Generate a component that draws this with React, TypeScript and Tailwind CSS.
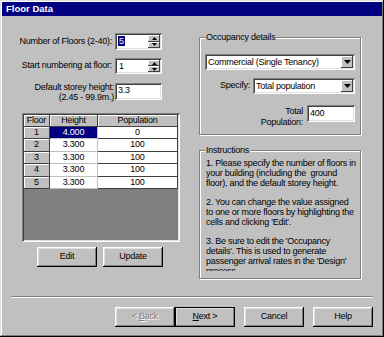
import type { ReactNode } from "react";

const raised =
  "shadow-[inset_-1px_-1px_0_#000,inset_1px_1px_0_#fff,inset_-2px_-2px_0_#808080,inset_2px_2px_0_#dfdfdf]";
const raisedThin = "shadow-[inset_-1px_-1px_0_#404040,inset_1px_1px_0_#fff]";
const sunken =
  "shadow-[inset_1px_1px_0_#808080,inset_-1px_-1px_0_#fff,inset_2px_2px_0_#404040,inset_-2px_-2px_0_#dfdfdf]";
const etched = "border border-[#808080] shadow-[inset_1px_1px_0_#fff,1px_1px_0_#fff]";

const Arrow = ({ up, big }: { up?: boolean; big?: boolean }) =>
  big ? (
    <svg width="7" height="4" viewBox="0 0 7 4">
      <polygon points="0,0 7,0 3.5,4" fill="#000" />
    </svg>
  ) : (
    <svg width="5" height="3" viewBox="0 0 5 3">
      <polygon points={up ? "2.5,0 5,3 0,3" : "0,0 5,0 2.5,3"} fill="#000" />
    </svg>
  );

const Spin = () => (
  <div className="flex w-[12px] flex-col">
    <div className={`flex flex-1 items-center justify-center bg-[#c0c0c0] ${raisedThin}`}>
      <Arrow up />
    </div>
    <div className={`flex flex-1 items-center justify-center bg-[#c0c0c0] ${raisedThin}`}>
      <Arrow />
    </div>
  </div>
);

const Button = ({ children, className = "" }: { children: ReactNode; className?: string }) => (
  <div className={`flex w-[60px] items-center justify-center bg-[#c0c0c0] ${raised} ${className}`}>
    {children}
  </div>
);

const rows = [
  ["1", "4.000", "0"],
  ["2", "3.300", "100"],
  ["3", "3.300", "100"],
  ["4", "3.300", "100"],
  ["5", "3.300", "100"],
];

export default function App() {
  return (
    <div
      className={`flex h-[337px] w-[384px] flex-col bg-[#c0c0c0] p-[2px] font-['Liberation_Sans',Arial,sans-serif] text-[9px] tracking-[-0.25px] text-black shadow-[inset_-1px_-1px_0_#000,inset_1px_1px_0_#dfdfdf,inset_-2px_-2px_0_#808080,inset_2px_2px_0_#fff]`}
    >
      {/* title bar */}
      <div className="flex h-[14px] items-center bg-[#000080] pl-[4px] text-[9.5px] font-bold tracking-normal text-white">
        Floor Data
      </div>

      <div className="flex h-[272px]">
        {/* left column */}
        <div className="flex w-[181px] flex-col pl-[9px] pt-[17px]">
          <div className="flex h-[17px] items-center">
            <div className="w-[104px] pr-[3px] text-right">Number of Floors (2-40):</div>
            <div className={`flex h-[17px] w-[47px] bg-white p-[2px] ${sunken}`}>
              <div className="flex-1 pl-[1px] leading-[13px]">
                <span className="bg-[#000080] px-[1px] text-white">5</span>
              </div>
              <Spin />
            </div>
          </div>
          <div className="mt-[8px] flex h-[16px] items-center">
            <div className="w-[104px] pr-[3px] text-right">Start numbering at floor:</div>
            <div className={`flex h-[16px] w-[47px] bg-white p-[2px] ${sunken}`}>
              <div className="flex-1 pl-[2px] leading-[12px]">1</div>
              <Spin />
            </div>
          </div>
          <div className="mt-[9px] flex h-[17px] items-center">
            <div className="w-[104px] pr-[1px] text-right leading-[10px]">
              Default storey height:
              <br />
              (2.45 - 99.9m.)
            </div>
            <div className={`h-[17px] w-[47px] bg-white p-[2px] pl-[3px] leading-[11px] ${sunken}`}>3.3</div>
          </div>

          {/* grid */}
          <div className={`ml-[11px] mt-[13px] flex h-[129px] w-[158px] flex-col bg-[#808080] p-[2px] ${sunken}`}>
            <div className="flex h-[12px] bg-[#c0c0c0] leading-[11px]">
              <div className="w-[26px] border-b border-r border-[#404040] text-center shadow-[inset_1px_1px_0_#fff]">Floor</div>
              <div className="w-[48px] border-b border-r border-[#404040] text-center shadow-[inset_1px_1px_0_#fff]">Height</div>
              <div className="w-[80px] border-b border-r border-[#404040] text-center shadow-[inset_1px_1px_0_#fff]">Population</div>
            </div>
            {rows.map((r, i) => (
              <div key={r[0]} className="flex h-[12.4px] leading-[11px]">
                <div className="w-[26px] border-b border-r border-[#404040] bg-[#c0c0c0] text-center shadow-[inset_1px_1px_0_#fff]">
                  {r[0]}
                </div>
                <div
                  className={`w-[48px] border-b border-r border-[#c0c0c0] text-center ${
                    i === 0 ? "bg-[#000080] text-white" : "bg-white"
                  }`}
                >
                  {r[1]}
                </div>
                <div className="w-[80px] border-b border-r border-[#404040] bg-white text-center">{r[2]}</div>
              </div>
            ))}
          </div>

          <div className="ml-[26px] mt-[5px] flex gap-[6px]">
            <Button className="h-[20px]">Edit</Button>
            <Button className="h-[20px]">Update</Button>
          </div>
        </div>

        {/* right column */}
        <div className="ml-[16px] flex w-[162px] flex-col">
          <div className={`relative mt-[21px] h-[98px] px-[5px] pt-[16px] ${etched}`}>
            <span className="absolute -top-[6px] left-[5px] bg-[#c0c0c0] px-[1px] leading-[10px]">Occupancy details</span>
            <div className={`flex h-[16px] w-[150px] bg-white p-[2px] ${sunken}`}>
              <div className="flex-1 pl-[1px] leading-[12px]">Commercial (Single Tenancy)</div>
              <div className={`flex w-[12px] items-center justify-center bg-[#c0c0c0] ${raisedThin}`}>
                <Arrow big />
              </div>
            </div>
            <div className="mt-[8px] flex items-center justify-end">
              <span className="mr-[3px]">Specify:</span>
              <div className={`flex h-[16px] w-[102px] bg-white p-[2px] ${sunken}`}>
                <div className="flex-1 pl-[1px] leading-[12px]">Total population</div>
                <div className={`flex w-[12px] items-center justify-center bg-[#c0c0c0] ${raisedThin}`}>
                  <Arrow big />
                </div>
              </div>
            </div>
            <div className="mt-[11px] flex items-start justify-end">
              <div className="mr-[4px] mt-[1px] text-right leading-[11px]">
                Total
                <br />
                Population:
              </div>
              <div className={`h-[17px] w-[48px] bg-white p-[2px] pl-[3px] leading-[12px] ${sunken}`}>400</div>
            </div>
          </div>

          <div className={`relative mt-[15px] h-[129px] pl-[6px] pt-[7px] ${etched}`}>
            <span className="absolute -top-[6px] left-[5px] bg-[#c0c0c0] px-[1px] leading-[10px]">Instructions</span>
            <div className="h-[113px] overflow-hidden whitespace-pre leading-[10px]">
              <p>
                1. Please specify the number of floors in
                <br />
                {"your building (including the  ground"}
                <br />
                floor), and the default storey height.
              </p>
              <p className="mt-[9px]">
                2. You can change the value assigned
                <br />
                to one or more floors by highlighting the
                <br />
                cells and clicking 'Edit'.
              </p>
              <p className="mt-[9px]">
                3. Be sure to edit the 'Occupancy
                <br />
                details'. This is used to generate
                <br />
                passenger arrival rates in the 'Design'
                <br />
                process.
              </p>
            </div>
          </div>
        </div>
      </div>

      {/* separator */}
      <div className="mx-[9px] mt-[8px] h-[2px] border-b border-t border-b-white border-t-[#808080]" />

      {/* wizard buttons */}
      <div className="mt-[9px] flex justify-end pr-[9px]">
        <Button className="h-[20px] text-[#808080] [text-shadow:1px_1px_0_#fff]">
          &lt; <span className="ml-[2px] underline">B</span>ack
        </Button>
        <Button className="h-[20px] outline outline-1 -outline-offset-1 outline-black">
          <span className="underline">N</span>ext &gt;
        </Button>
        <Button className="ml-[9px] h-[20px]">Cancel</Button>
        <Button className="ml-[9px] h-[20px]">Help</Button>
      </div>
    </div>
  );
}
